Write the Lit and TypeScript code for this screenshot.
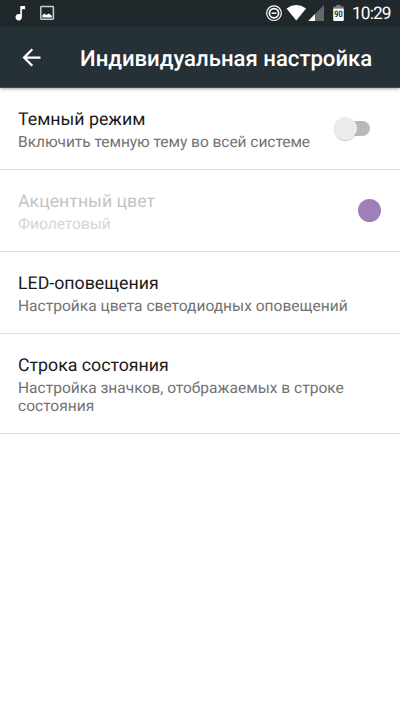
import { LitElement, html, css } from "lit";
import { customElement } from "lit/decorators.js";

@customElement("app-root")
class AppRoot extends LitElement {
  static styles = css`
    :host { display: flex; flex-direction: column; height: 711px; width: 400px; background: #fff; font-family: Roboto, sans-serif; overflow: hidden; text-rendering: geometricPrecision; }
    svg { display: block; flex: none; }
    .status { height: 26px; background: #21282b; flex: none; }
    .clock { font-size: 17.3px; fill: #fff; font-family: Roboto, sans-serif; }
    .bat { font-size: 9px; font-weight: 700; fill: #21282b; font-family: Roboto, sans-serif; }
    .bar { height: 62px; background: #263137; display: flex; align-items: center; flex: none; box-shadow: 0 1px 3px rgba(0,0,0,.35); border-bottom: 1px solid #3f484d; box-sizing: border-box; color: #fff; }
    .arrow { margin: 2px 0 0 18px; }
    .title { margin: 4px 0 0 35px; font-size: 22.15px; font-weight: 500; white-space: nowrap; line-height: 26px; }
    .row { display: flex; align-items: center; justify-content: space-between; box-sizing: border-box; height: 82px; padding: 0 18px; border-bottom: 1px solid #dedede; }
    .tall { height: 100px; }
    .name { font-size: 17.75px; line-height: 24px; color: #1a1a1a; padding-top: 1px; }
    .desc { font-size: 15.55px; line-height: 18px; color: #737373; white-space: nowrap; margin: 1px 0 0; }
    .tight .desc { letter-spacing: -.06px; }
    .off .name { color: #c4c4c4; }
    .off .desc { color: #d6d6d6; }
    .switch { position: relative; width: 32px; height: 15px; margin: 0 12px 0 0; border-radius: 8px; background: #b9b9b9; }
    .thumb { position: absolute; left: -4px; top: -4px; width: 23px; height: 23px; border-radius: 50%; background: #ebebeb; box-shadow: 0 1px 1px rgba(0,0,0,.2); }
    .dot { width: 23px; height: 23px; border-radius: 50%; background: #9f7fba; margin: 0 1px 0 0; }
  `;

  row(name: string, desc: unknown, extra: unknown = "", cls = "") {
    return html`<div class="row ${cls}"><div><div class="name">${name}</div><div class="desc">${desc}</div></div>${extra}</div>`;
  }

  render() {
    return html`
      <svg class="status" width="400" height="26" viewBox="0 0 400 26">
        <path fill="#fff" transform="translate(10.7 3.6) scale(.8)" d="M12 3v10.55c-.59-.34-1.27-.55-2-.55-2.21 0-4 1.79-4 4s1.79 4 4 4 4-1.79 4-4V7h4V3z"/>
        <rect x="40.8" y="6.6" width="12.6" height="12.6" rx=".6" fill="none" stroke="#c9cccd" stroke-width="1.5"/>
        <path fill="#fff" d="M42.4 17.6v-2.4l2-1.8 2 1.5 2.4-1.500 3 2.400v1.800z"/>
        <circle cx="274" cy="13.2" r="7.3" fill="none" stroke="#fff" stroke-width="1.2"/>
        <circle cx="274" cy="13.2" r="4.6" fill="none" stroke="#fff" stroke-width="1.7"/>
        <path d="M271.6 13.2h4.8" stroke="#fff" stroke-width="1.5"/>
        <path fill="#fff" d="M296.3 20.6 286.5 8.4q9.8-6.6 19.6 0z"/>
        <path fill="#63686a" d="M324 5v16h-15.8z"/>
        <path fill="#fff" d="M315 14.1V21h-6.8z"/>
        <path fill="#777c7e" d="M336.2 5h4.6v1.6h3v2h-10.6v-2h3z"/>
        <path fill="#fff" d="M333.2 8.4h10.6V20q0 .9-.9.9h-8.8q-.9 0-.9-.9z"/>
        <text class="bat" x="334.3" y="16.6" textLength="8.4" lengthAdjust="spacingAndGlyphs">90</text>
        <text class="clock" x="352" y="19" textLength="39.5">10:29</text>
      </svg>
      <header class="bar">
        <svg class="arrow" width="27" height="27" viewBox="0 0 24 24"><path fill="#fff" d="M20 11H7.83l5.59-5.59L12 4l-8 8 8 8 1.41-1.41L7.83 13H20z"/></svg>
        <h1 class="title">Индивидуальная настройка</h1>
      </header>
      ${this.row("Темный режим", "Включить темную тему во всей системе", html`<div class="switch"><div class="thumb"></div></div>`, "tight")}
      ${this.row("Акцентный цвет", "Фиолетовый", html`<div class="dot"></div>`, "off")}
      ${this.row("LED-оповещения", "Настройка цвета светодиодных оповещений")}
      ${this.row("Строка состояния", html`Настройка значков, отображаемых в строке<br>состояния`, "", "tall")}
    `;
  }
}
